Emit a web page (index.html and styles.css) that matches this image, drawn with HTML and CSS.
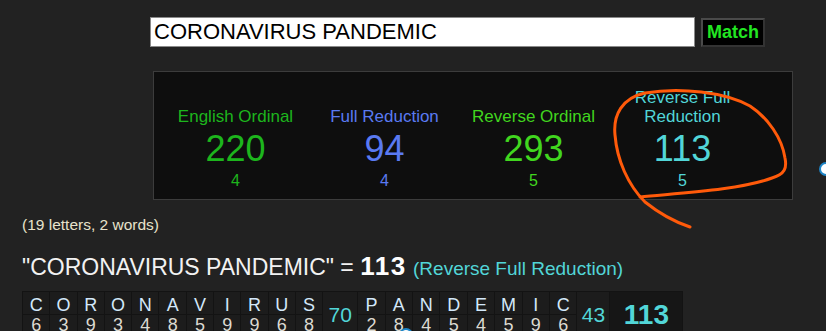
FILE: index.html
```html
<!DOCTYPE html>
<html lang="en">

<head>
    <meta charset="UTF-8">
    <meta name="viewport" content="width=device-width, initial-scale=1.0">
    <title>Gematria Calculator</title>
    <link rel="stylesheet" href="styles.css">
</head>

<body>
    <!-- Search -->
    <div class="search">
        <input class="phrase" type="text" value="CORONAVIRUS PANDEMIC">
        <button class="match-button">Match</button>
    </div>

    <!-- Cipher totals -->
    <div class="summary">
        <div class="cipher eo">
            <div class="cipher-name">English Ordinal</div>
            <div class="cipher-value">220</div>
            <div class="cipher-reduced">4</div>
        </div>
        <div class="cipher fr">
            <div class="cipher-name">Full Reduction</div>
            <div class="cipher-value">94</div>
            <div class="cipher-reduced">4</div>
        </div>
        <div class="cipher ro">
            <div class="cipher-name">Reverse Ordinal</div>
            <div class="cipher-value">293</div>
            <div class="cipher-reduced">5</div>
        </div>
        <div class="cipher rfr">
            <div class="cipher-name">Reverse Full Reduction</div>
            <div class="cipher-value">113</div>
            <div class="cipher-reduced">5</div>
        </div>
    </div>

    <p class="count">(19 letters, 2 words)</p>

    <h2 class="result">"CORONAVIRUS PANDEMIC" = <b>113</b> <span>(Reverse Full Reduction)</span></h2>

    <!-- Letter breakdown -->
    <div class="breakdown">
        <div class="ch">C</div><div class="ch">O</div><div class="ch">R</div><div class="ch">O</div><div class="ch">N</div><div class="ch">A</div><div class="ch">V</div><div class="ch">I</div><div class="ch">R</div><div class="ch">U</div><div class="ch">S</div>
        <div class="word-sum">70</div>
        <div class="ch">P</div><div class="ch">A</div><div class="ch">N</div><div class="ch">D</div><div class="ch">E</div><div class="ch">M</div><div class="ch">I</div><div class="ch">C</div>
        <div class="word-sum">43</div>
        <div class="total">113</div>
        <div class="num">6</div><div class="num">3</div><div class="num">9</div><div class="num">3</div><div class="num">4</div><div class="num">8</div><div class="num">5</div><div class="num">9</div><div class="num">9</div><div class="num">6</div><div class="num">8</div>
        <div class="num">2</div><div class="num">8</div><div class="num">4</div><div class="num">5</div><div class="num">4</div><div class="num">5</div><div class="num">9</div><div class="num">6</div>
    </div>

    <!-- Hand drawn circle over the screenshot -->
    <svg class="scribble" width="826" height="331" viewBox="0 0 826 331">
        <path d="M 640 197 C 680 193, 740 190, 772 178 C 785 174, 787 168, 785 158 C 782 138, 768 118, 750 106 C 725 92, 680 87, 645 93 C 622 98, 613 115, 615 135 C 617 160, 628 185, 645 202 C 660 214, 675 222, 690 227"
            fill="none" stroke="#ff5a0a" stroke-width="3" stroke-linecap="round" stroke-linejoin="round" />
    </svg>
    <div class="handle handle-right"></div>
    <div class="handle handle-bottom"></div>
</body>
</html>
```

FILE: styles.css
```css
html,
body {
    overflow: hidden;
}

body {
    margin: 0;
    height: 331px;
    background-color: #222;
    font-family: "Liberation Sans", Arial, sans-serif;
    position: relative;
}

.search {
    display: flex;
    align-items: flex-start;
    gap: 6px;
    padding: 17px 0 0 150px;
}

.phrase {
    box-sizing: border-box;
    width: 545px;
    height: 30px;
    margin: 0;
    padding: 0 3px;
    border: 1px solid #8a8a8a;
    background-color: #fff;
    color: #000;
    font-family: "Liberation Sans", Arial, sans-serif;
    font-size: 22px;
}

.match-button {
    box-sizing: border-box;
    height: 29px;
    margin-top: 1px;
    padding: 0 4px;
    border: 2px solid #4a4a4a;
    border-right-color: #333;
    border-bottom-color: #333;
    background-color: #000;
    color: #22e622;
    font-family: "Liberation Sans", Arial, sans-serif;
    font-size: 18px;
    font-weight: bold;
}

.summary {
    box-sizing: border-box;
    display: flex;
    align-items: flex-end;
    width: 640px;
    height: 129px;
    margin: 24px 0 0 153px;
    padding: 0 0 9px 7px;
    background-color: #0e0e0e;
    border: 1px solid #3c3c3c;
}

.cipher {
    width: 149px;
    text-align: center;
}

.cipher-name {
    font-size: 17px;
    line-height: 19px;
}

.cipher-value {
    font-size: 36px;
    line-height: 46px;
}

.cipher-reduced {
    font-size: 16px;
    line-height: 18px;
}

.eo {
    color: #1db51d;
}

.fr {
    color: #5a7af2;
}

.ro {
    color: #41d61f;
}

.rfr {
    color: #52d6d8;
}

.rfr .cipher-name {
    padding: 0 22px;
}

.count {
    margin: 16px 0 0 22px;
    font-size: 15.5px;
    line-height: 18px;
    color: #e8e2cc;
}

.result {
    margin: 17px 0 0 22px;
    font-size: 23px;
    font-weight: normal;
    line-height: 30px;
    color: #f2f2f2;
}

.result b {
    font-size: 26px;
    letter-spacing: 1.5px;
    color: #fff;
}

.result span {
    font-size: 19px;
    color: #52d6d8;
}

.breakdown {
    display: grid;
    grid-template-columns: repeat(11, 26.3px) 34px repeat(8, 26.4px) 32px 72px;
    grid-template-rows: 22px 22px;
    gap: 1px;
    width: max-content;
    margin: 7px 0 0 22px;
    padding: 1px;
    background-color: #131313;
}

.ch,
.num {
    text-align: center;
    font-size: 18px;
    line-height: 18px;
    background-color: #1c1c1c;
}

.ch {
    padding-top: 4px;
    color: #d3e8fa;
}

.num {
    padding-top: 1px;
    color: #dcdad2;
}

.word-sum,
.total {
    grid-row: span 2;
    display: flex;
    align-items: center;
    justify-content: center;
    color: #52d6d8;
}

.word-sum {
    font-size: 21px;
    background-color: #1c1c1c;
}

.total {
    font-size: 28px;
    font-weight: bold;
    background-color: #161616;
}

.scribble {
    position: absolute;
    top: 0;
    left: 0;
    pointer-events: none;
}

.handle {
    position: absolute;
    width: 10px;
    height: 10px;
    border: 2.5px solid #1f86c8;
    border-radius: 50%;
    background-color: #fff;
}

.handle-right {
    top: 162px;
    left: 819px;
}

.handle-bottom {
    top: 328px;
    left: 399px;
}
```
